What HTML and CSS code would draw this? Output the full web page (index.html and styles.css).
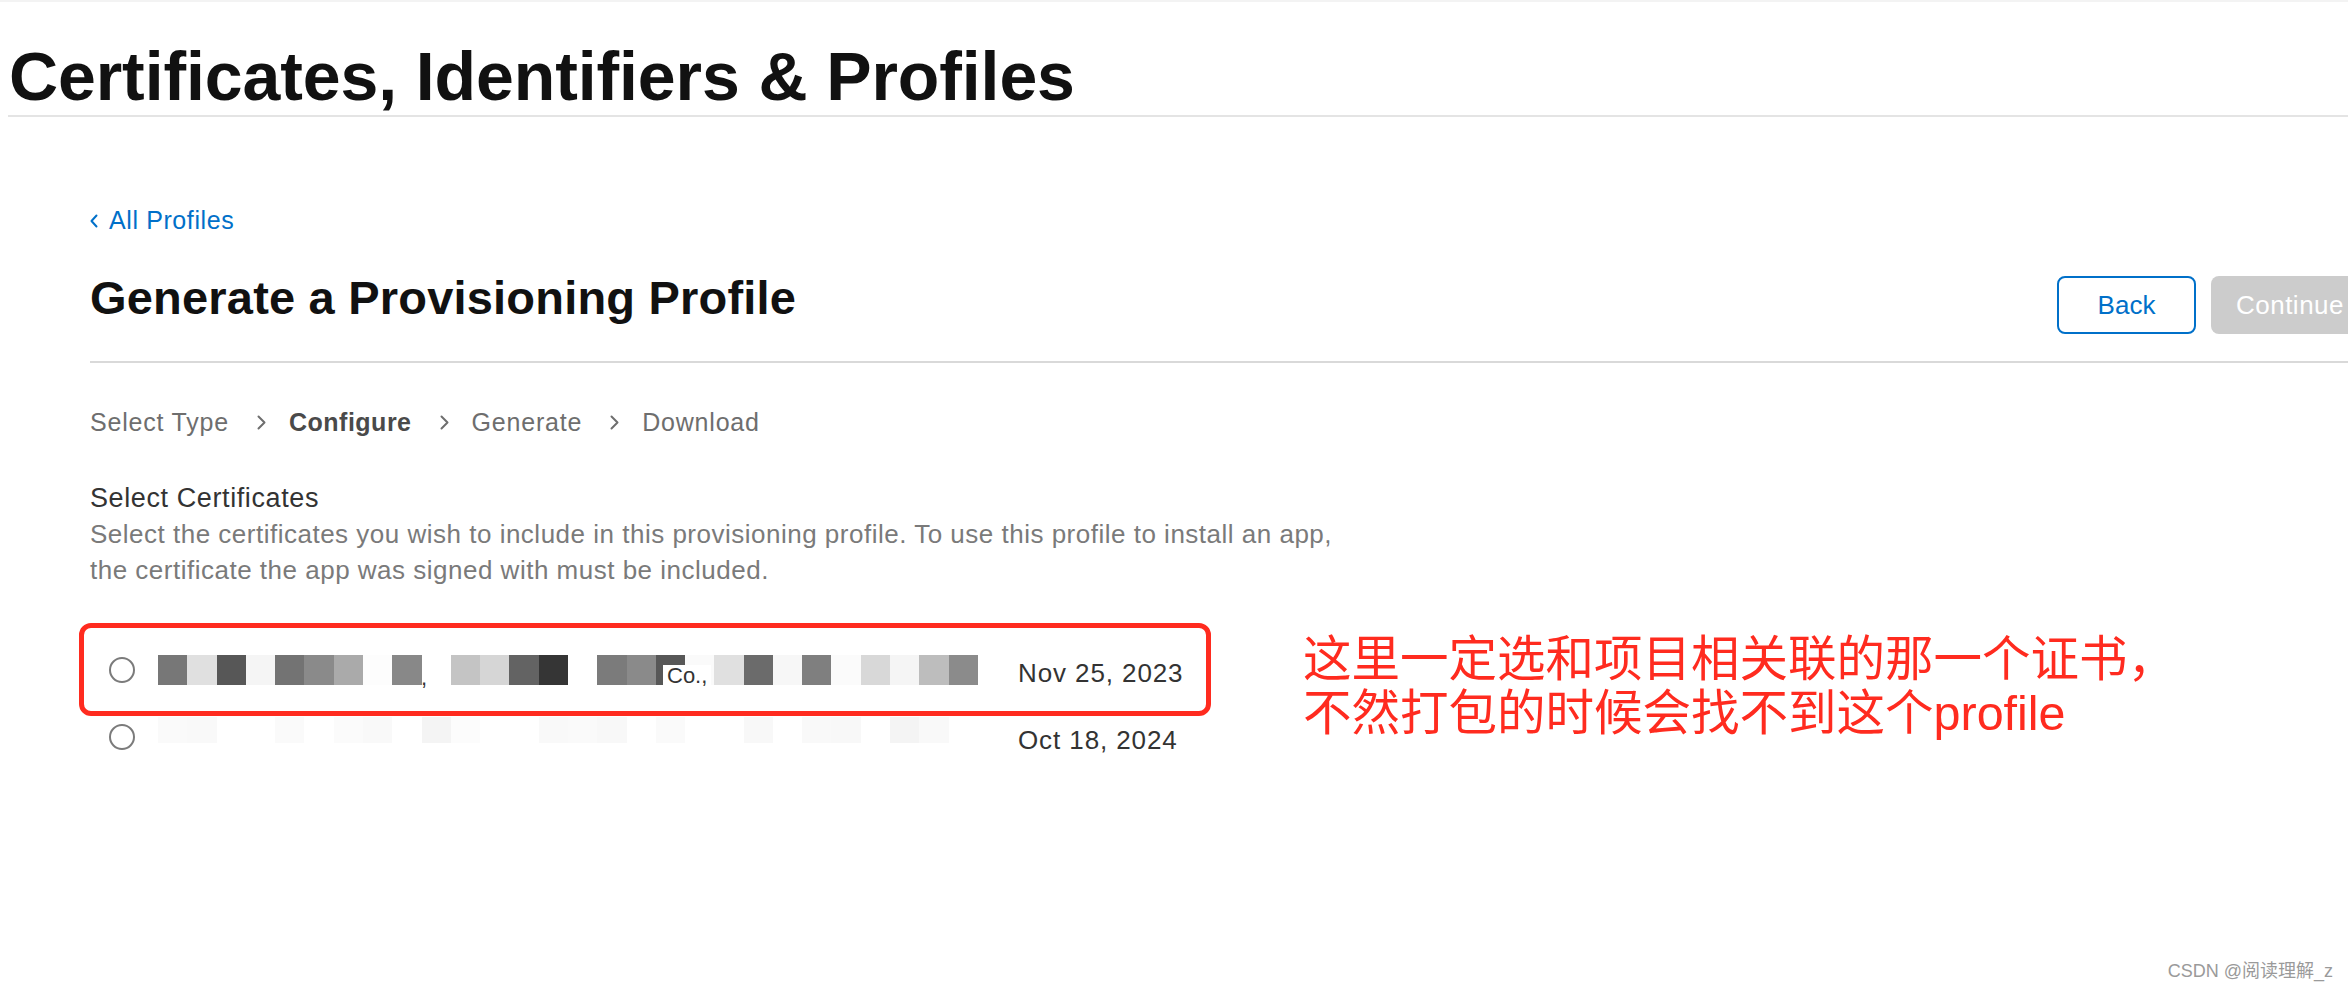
FILE: index.html
```html
<!DOCTYPE html>
<html lang="en">
<head>
<meta charset="utf-8">
<title>Certificates, Identifiers &amp; Profiles</title>
<link rel="stylesheet" href="styles.css">
</head>
<body>
<div class="topline"></div>
<h1 class="site-title">Certificates, Identifiers &amp; Profiles</h1>

<main class="main">
  <a class="back-link" href="#">
    <svg class="back-chev" width="8" height="14" viewBox="0 0 8 14"><path d="M6.5 1.5 L1.5 7 L6.5 12.5" fill="none" stroke="#0070c9" stroke-width="2" stroke-linecap="round" stroke-linejoin="round"/></svg>
    <span>All Profiles</span>
  </a>

  <div class="page-head">
    <h2 class="page-title">Generate a Provisioning Profile</h2>
    <div class="actions">
      <button class="btn btn-back">Back</button>
      <button class="btn btn-continue">Continue</button>
    </div>
  </div>

  <nav class="steps">
    <span>Select Type</span>
    <svg class="step-chev" width="9" height="15" viewBox="0 0 9 15"><path d="M1.5 1.5 L7.5 7.5 L1.5 13.5" fill="none" stroke="#6e6e6e" stroke-width="2" stroke-linecap="round" stroke-linejoin="round"/></svg>
    <span class="current">Configure</span>
    <svg class="step-chev" width="9" height="15" viewBox="0 0 9 15"><path d="M1.5 1.5 L7.5 7.5 L1.5 13.5" fill="none" stroke="#6e6e6e" stroke-width="2" stroke-linecap="round" stroke-linejoin="round"/></svg>
    <span>Generate</span>
    <svg class="step-chev" width="9" height="15" viewBox="0 0 9 15"><path d="M1.5 1.5 L7.5 7.5 L1.5 13.5" fill="none" stroke="#6e6e6e" stroke-width="2" stroke-linecap="round" stroke-linejoin="round"/></svg>
    <span>Download</span>
  </nav>

  <h3 class="section-title">Select Certificates</h3>
  <p class="section-desc">Select the certificates you wish to include in this provisioning profile. To use this profile to install an app,<br>the certificate the app was signed with must be included.</p>

  <div class="cert-area">
    <div class="cert-list">
      <div class="highlight"></div>
      <div class="cert-row">
        <span class="radio"></span>
        <div class="mosaic">
          <i style="--c:#777"></i><i style="--c:#e0e0e0"></i><i style="--c:#575757"></i><i style="--c:#f5f5f5"></i><i style="--c:#737373"></i><i style="--c:#8a8a8a"></i><i style="--c:#aaa"></i><i style="--c:#fdfdfd"></i><i style="--c:#888"></i><i style="--c:#fff"></i><i style="--c:#c4c4c4"></i><i style="--c:#d6d6d6"></i><i style="--c:#636363"></i><i style="--c:#353535"></i><i style="--c:#fff"></i><i style="--c:#7b7b7b"></i><i style="--c:#8a8a8a"></i><i style="--c:#575757"></i><i style="--c:#fafafa"></i><i style="--c:#e0e0e0"></i><i style="--c:#6b6b6b"></i><i style="--c:#f7f7f7"></i><i style="--c:#7f7f7f"></i><i style="--c:#fbfbfb"></i><i style="--c:#d8d8d8"></i><i style="--c:#f5f5f5"></i><i style="--c:#bdbdbd"></i><i style="--c:#8b8b8b"></i>
          <span class="frag frag-comma">,</span>
          <span class="frag frag-co">Co.,</span>
        </div>
        <span class="date">Nov 25, 2023</span>
      </div>
      <div class="cert-row">
        <span class="radio"></span>
        <div class="mosaic mosaic-faint">
          <i style="--c:#fafafa"></i><i style="--c:#f9f9f9"></i><i style="--c:#fff"></i><i style="--c:#fff"></i><i style="--c:#fafafa"></i><i style="--c:#fff"></i><i style="--c:#fbfbfb"></i><i style="--c:#f9f9f9"></i><i style="--c:#fff"></i><i style="--c:#f4f4f4"></i><i style="--c:#fcfcfc"></i><i style="--c:#fff"></i><i style="--c:#fff"></i><i style="--c:#f9f9f9"></i><i style="--c:#fafafa"></i><i style="--c:#f8f8f8"></i><i style="--c:#fff"></i><i style="--c:#fafafa"></i><i style="--c:#fff"></i><i style="--c:#fff"></i><i style="--c:#f8f8f8"></i><i style="--c:#fff"></i><i style="--c:#f9f9f9"></i><i style="--c:#f8f8f8"></i><i style="--c:#fff"></i><i style="--c:#f4f4f4"></i><i style="--c:#f9f9f9"></i><i style="--c:#fff"></i>
        </div>
        <span class="date">Oct 18, 2024</span>
      </div>
    </div>
    <p class="annotation">这里一定选和项目相关联的那一个证书，<br>不然打包的时候会找不到这个profile</p>
  </div>
</main>

<div class="watermark">CSDN @阅读理解_z</div>
</body>
</html>
```

FILE: styles.css
```css
html, body {
  margin: 0;
  padding: 0;
  overflow: hidden;
  background: #fff;
}

body {
  font-family: "Liberation Sans", Arial, "Noto Sans CJK SC", sans-serif;
  color: #1d1d1f;
  width: 2348px;
  height: 990px;
  position: relative;
}

.topline {
  height: 2px;
  background: #f3f3f3;
}

.site-title {
  margin: 39.5px 0 0 8px;
  padding: 0 0 5px 1px;
  border-bottom: 2px solid #e4e4e4;
  font-size: 68px;
  line-height: 68px;
  font-weight: 700;
  letter-spacing: -0.1px;
  color: #111;
}

.main {
  padding-left: 90px;
  width: 2279px;
}

.back-link {
  margin-top: 88.5px;
  display: flex;
  align-items: center;
  gap: 11px;
  font-size: 25px;
  line-height: 30px;
  letter-spacing: 0.6px;
  color: #0070c9;
  text-decoration: none;
  width: max-content;
}

.back-chev {
  display: block;
  margin-top: 1px;
}

.page-head {
  margin-top: 35px;
  display: flex;
  align-items: baseline;
  justify-content: space-between;
  padding-bottom: 27px;
  border-bottom: 2px solid #d9d9d9;
}

.page-title {
  margin: 0;
  font-size: 47px;
  line-height: 56px;
  font-weight: 700;
  letter-spacing: 0.2px;
  color: #111;
}

.actions {
  display: flex;
  align-items: baseline;
  gap: 15px;
}

.btn {
  box-sizing: border-box;
  height: 58px;
  border-radius: 8px;
  font-family: "Liberation Sans", Arial, sans-serif;
  font-size: 26px;
  line-height: 54px;
  padding: 0;
  text-align: center;
  border: 2px solid transparent;
}

.btn-back {
  width: 139px;
  background: #fff;
  border-color: #0070c9;
  color: #0070c9;
}

.btn-continue {
  width: 158px;
  background: #cccccc;
  color: #fff;
  letter-spacing: 0.5px;
}

.steps {
  margin-top: 44px;
  display: flex;
  align-items: center;
  font-size: 25px;
  line-height: 30px;
  letter-spacing: 0.8px;
  color: #6e6e6e;
}

.steps .current {
  font-weight: 700;
  color: #4a4a4a;
  letter-spacing: 0.5px;
}

.step-chev {
  display: block;
  margin: 0 23px 0 28px;
}

.section-title {
  margin: 43px 0 0;
  font-size: 27px;
  line-height: 36px;
  font-weight: 400;
  color: #333;
  letter-spacing: 0.6px;
}

.section-desc {
  margin: 0;
  font-size: 26px;
  line-height: 36px;
  color: #7a7a7a;
  letter-spacing: 0.5px;
  white-space: nowrap;
}

.cert-area {
  margin-top: 48.5px;
  display: flex;
  align-items: flex-start;
}

.cert-list {
  position: relative;
  width: 1120px;
}

.highlight {
  position: absolute;
  left: -11px;
  top: -13.5px;
  width: 1132px;
  height: 93px;
  box-sizing: border-box;
  border: 5px solid #ff2b1f;
  border-radius: 12px;
}

.cert-row {
  height: 67px;
  display: flex;
  align-items: center;
}

.radio {
  box-sizing: border-box;
  width: 26px;
  height: 26px;
  margin-left: 19px;
  border: 2px solid #7b7b7b;
  border-radius: 50%;
  flex: none;
}

.mosaic {
  position: relative;
  margin-left: 23px;
  width: 820px;
  height: 30px;
  display: flex;
  flex: none;
}

.mosaic i {
  flex: 1;
  background: var(--c);
}

.mosaic-faint {
  height: 26px;
  align-self: flex-start;
  margin-top: 13.5px;
}

.frag {
  position: absolute;
  font-size: 22px;
  line-height: 22px;
  color: #333;
}

.frag-comma {
  left: 263px;
  top: 12px;
}

.frag-co {
  left: 505px;
  top: 10px;
  padding: 0 4px;
  background: #fff;
}

.date {
  margin-left: 40px;
  padding-top: 6px;
  font-size: 26px;
  line-height: 30px;
  letter-spacing: 0.9px;
  color: #333;
  white-space: nowrap;
}

.annotation {
  margin: -4.5px 0 0 93px;
  font-family: "Liberation Sans", "Noto Sans CJK SC", sans-serif;
  font-size: 48.5px;
  line-height: 54px;
  color: #ff2b1f;
  white-space: nowrap;
}

.annotation-latin {
  letter-spacing: 0.5px;
}

.watermark {
  position: absolute;
  right: 15px;
  bottom: 8px;
  font-family: "Liberation Sans", "Noto Sans CJK SC", sans-serif;
  font-size: 18px;
  line-height: 22px;
  color: #9a9a9a;
}
```
